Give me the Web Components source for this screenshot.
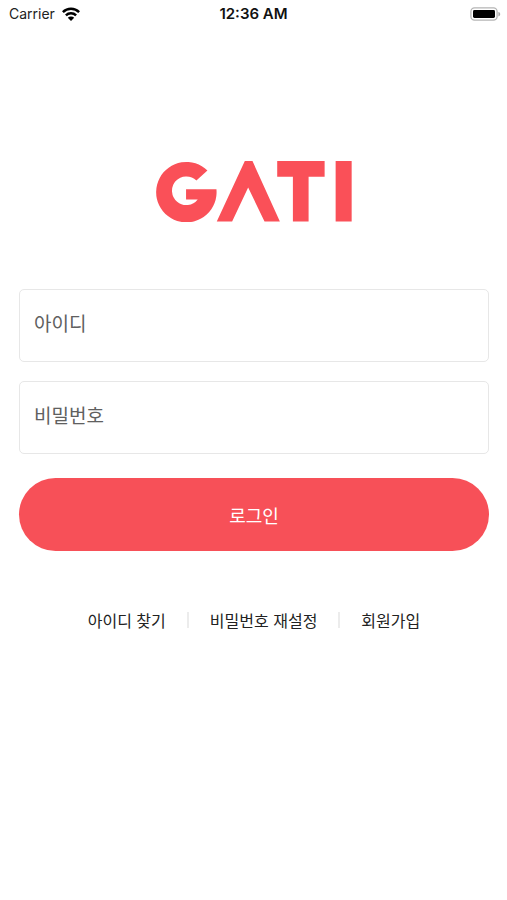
<!DOCTYPE html>
<html lang="ko">
<head>
<meta charset="utf-8">
<meta name="viewport" content="width=device-width, initial-scale=1">
<title>GATI 로그인</title>
<style>
body { margin: 0; background: #fff; color: #222; font-family: "Noto Sans CJK KR", sans-serif; }
</style>
</head>
<body>
<login-screen></login-screen>
<script>
const define = (name, markup, setup) => {
  const template = document.createElement('template');
  template.innerHTML = markup;
  customElements.define(name, class extends HTMLElement {
    constructor() {
      super();
      this.attachShadow({ mode: 'open', delegatesFocus: true }).append(template.content.cloneNode(true));
    }
    connectedCallback() { if (setup) setup(this, this.shadowRoot); }
  });
};

define('status-bar', `
<style>
:host { display: grid; grid-template-columns: 1fr auto 1fr; align-items: center; height: 28px; padding: 0 6px; font: 14px/20px Inter, sans-serif; color: #222; }
.carrier { display: flex; align-items: center; gap: 7px; padding-left: 3px; }
.time { font-size: 15px; font-weight: 600; color: #111; }
.battery { justify-self: end; }
svg { display: block; }
</style>
<div class="carrier"><span>Carrier</span>
<svg width="18" height="14" viewBox="0 0 18 14" aria-hidden="true">
<g fill="none" stroke="#000" stroke-width="2.5"><path d="M.9 5.1A11.6 11.6 0 0 1 17.1 5.1"/><path d="M3.9 8.3A7.3 7.3 0 0 1 14.1 8.3"/></g>
<path d="M9 14 5.8 10.7A4.6 4.6 0 0 1 12.2 10.7Z"/></svg></div>
<span class="time">12:36 AM</span>
<svg class="battery" width="31" height="14" viewBox="0 0 31 14" aria-hidden="true">
<rect x=".9" y=".9" width="26.2" height="12.2" rx="3.6" fill="#fff" stroke="#b5b5b5" stroke-width="1.3"/>
<rect x="3" y="3" width="22" height="8" rx="1.4"/><path d="M28.4 5v4.4c1.2-.4 1.8-1.2 1.8-2.2s-.6-1.8-1.8-2.2Z" fill="#aaa"/></svg>`);

define('brand-logo', `
<style>:host { display: block; } svg { display: block; width: 196px; height: 61px; }</style>
<svg viewBox="33 33 587 182" fill="#fa5058" role="img" aria-label="GATI">
<path d="M187 61A90.5 90.5 0 1 0 214 117H123V148H158A43 43 0 1 1 154 91Z"/>
<path d="M215 214 299 33H322L404 214H358L309 112 261 214Z"/>
<path d="M396 33H538V80H490V214H443V80H396Z"/>
<path d="M571 33H619V214H571Z"/></svg>`);

define('text-field', `
<style>
:host { display: block; }
input { box-sizing: border-box; display: block; width: 100%; height: 73px; margin: 0; padding: 0 14px 7px; border: 1px solid #e7e7e7; border-radius: 5px; background: #fff; color: #222; font: 19px/28px "Noto Sans CJK KR", sans-serif; outline-color: #fa5058; }
input::placeholder { color: #606060; opacity: 1; }
</style><input>`, (host, root) => {
  const input = root.querySelector('input');
  input.type = host.getAttribute('type') || 'text';
  input.placeholder = host.getAttribute('label');
  input.setAttribute('aria-label', host.getAttribute('label'));
});

define('primary-button', `
<style>
:host { display: block; }
button { display: block; width: 100%; height: 73px; padding: 0; border: 0; border-radius: 37px; background: #f75058; color: #fff; font: 18px/28px "Noto Sans CJK KR", sans-serif; cursor: pointer; }
</style><button type="button"><slot></slot></button>`);

define('link-row', `
<style>
:host { display: flex; justify-content: center; align-items: center; gap: 21px; font-size: 16px; line-height: 24px; }
::slotted(a) { color: #222; text-decoration: none; white-space: nowrap; }
::slotted(hr) { width: 2px; height: 16px; margin: 0; border: 0; background: #ececec; }
</style><slot></slot>`);

define('login-screen', `
<style>
:host { display: flex; flex-direction: column; min-height: 100vh; }
main { display: flex; flex-direction: column; padding: 133px 18px 0 19px; }
brand-logo { align-self: center; margin-bottom: 67px; }
.fields { display: grid; gap: 19px; margin-bottom: 24px; }
link-row { margin-top: 57px; }
</style>
<status-bar></status-bar>
<main>
<brand-logo></brand-logo>
<div class="fields"><text-field label="아이디"></text-field><text-field label="비밀번호" type="password"></text-field></div>
<primary-button>로그인</primary-button>
<link-row><a href="#find-id">아이디 찾기</a><hr><a href="#reset">비밀번호 재설정</a><hr><a href="#join">회원가입</a></link-row>
</main>`);
</script>
</body>
</html>
